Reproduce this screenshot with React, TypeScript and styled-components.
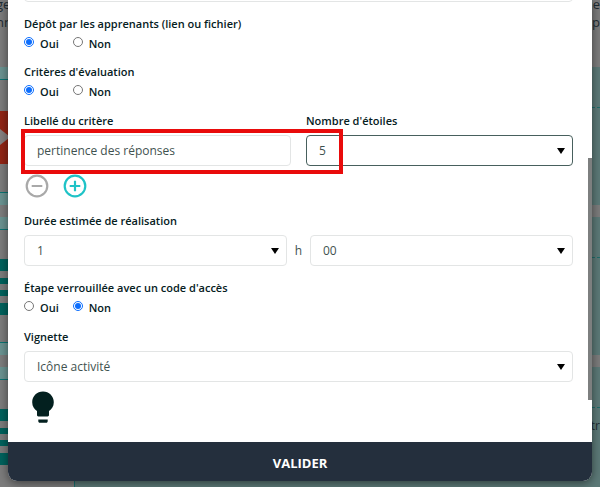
import React, { useState } from "react";
import styled, { createGlobalStyle } from "styled-components";

const GlobalStyle = createGlobalStyle`
  *, *::before, *::after { box-sizing: border-box; }
  body {
    margin: 0;
    background: #7c7c7c;
    color: #06201e;
    font-family: "Open Sans", "Noto Sans", sans-serif;
    font-size: 12px;
    line-height: 16px;
  }
`;

const Page = styled.div`
  position: relative;
  min-height: 100vh;
  overflow: hidden;
`;

/* Dimmed course page behind the dialog */
const Backdrop = styled.div`
  position: absolute;
  inset: 0;
  overflow: hidden;
  background: #7c7c7c;
  color: #1f2c33;
`;

const Intro = styled.div`
  display: flex;
  flex-direction: column;
  height: 67px;
  margin: -5px 0 5px -4px;
  font-size: 13px;
  line-height: 18px;
`;

const IntroLine = styled.div`
  display: flex;
  justify-content: space-between;
`;

const Lesson = styled.div`
  display: grid;
  grid-template-columns: 75px 1fr;
  height: 138px;
  margin-bottom: 12px;
`;

const Thumb = styled.div`
  display: flex;
  flex-direction: column;
  justify-content: space-between;
  border-right: 1px solid #18706f;
`;

const Band = styled.div<{ $edge: "top" | "bottom" }>`
  height: 13px;
  background: #6a9391;
  border-${(p) => p.$edge}: 1px solid #0b7473;
`;

const VideoTile = styled.div`
  display: flex;
  align-items: center;
  height: 53px;
  margin-top: 2px;
  background: #912515;
`;

const TextTile = styled.div`
  display: flex;
  flex-direction: column;
  justify-content: space-between;
  height: 56px;
  margin-top: 2px;
`;

const Stripe = styled.div<{ $thick?: boolean }>`
  height: ${(p) => (p.$thick ? 12 : 6)}px;
  background: #00625d;
`;

const Summary = styled.div`
  display: flex;
  flex-direction: column;
  gap: 10px;
  padding-top: 40px;
  background: #5c7977;
  text-align: right;
`;

const Dashes = styled.div`
  border-top: 1px dashed #1f6c6a;
`;

const Dialog = styled.form`
  position: relative;
  margin: 0 8px 6px;
  border-radius: 0 0 9px 9px;
  overflow: hidden;
  background: #fff;
  box-shadow: 0 2px 10px rgba(0, 0, 0, 0.5);
`;

const Scroller = styled.div`
  display: flex;
  overflow: hidden;
`;

const Fields = styled.div`
  flex: 1;
  min-width: 0;
  padding: 0 15px 18px 16px;
`;

const Rail = styled.div`
  display: flex;
  flex-direction: column;
  justify-content: flex-end;
  width: 4px;
  padding-bottom: 42px;
`;

const RailThumb = styled.div`
  height: 242px;
  background: #7d7f7f;
`;

const Group = styled.fieldset`
  margin: 0 0 12px;
  padding: 0;
  border: 0;
  min-width: 0;
`;

const Block = styled.div`
  margin-bottom: 14px;
`;

const Legend = styled.legend`
  padding: 0;
  font-size: 11px;
  font-weight: 600;
  line-height: 16px;
`;

const Label = styled.label`
  display: block;
  padding-top: 1px;
  margin-bottom: 6px;
  font-size: 11px;
  font-weight: 600;
  line-height: 16px;
`;

const Choices = styled.div`
  display: flex;
  gap: 14px;
  height: 20px;
`;

const Choice = styled.label`
  display: flex;
  gap: 6px;
  font-size: 11px;
  font-weight: 600;
  line-height: 24px;
`;

const Radio = styled.input`
  width: 10px;
  height: 10px;
  margin: 5px 0;
  accent-color: #0d6efd;
`;

const TextBox = styled.input`
  display: block;
  width: 100%;
  height: 31px;
  padding: 0 12px;
  border: 1px solid #e3e5e5;
  border-radius: 4px;
  background: #fff;
  color: #3f5250;
  font: inherit;
  outline: none;
`;

const PreviousBox = styled(TextBox)`
  margin-top: -29px;
  margin-bottom: 14px;
`;

const SelectWrap = styled.div`
  position: relative;
`;

const SelectBox = styled.select<{ $active?: boolean }>`
  display: block;
  width: 100%;
  height: 31px;
  padding: 0 24px 0 12px;
  border: 1px solid ${(p) => (p.$active ? "#48605d" : "#e3e5e5")};
  border-radius: 4px;
  background: #fff;
  color: #3f5250;
  font: inherit;
  appearance: none;
  outline: none;
`;

const Arrow = styled.svg`
  position: absolute;
  right: 8px;
  top: 50%;
  width: 8px;
  height: 6px;
  margin-top: -3px;
  pointer-events: none;
`;

const CriterionRow = styled.div`
  position: relative;
  display: grid;
  grid-template-columns: 1fr 1fr;
  gap: 15px;
`;

const Highlight = styled.div`
  position: absolute;
  left: -3px;
  right: 230px;
  bottom: -8px;
  height: 45px;
  border: 4px solid #e90b0b;
  pointer-events: none;
`;

const Actions = styled.div`
  display: flex;
  gap: 14px;
  margin-top: 8px;
  padding-left: 1px;
`;

const RoundButton = styled.button<{ $color: string }>`
  display: block;
  width: 24px;
  height: 24px;
  padding: 0;
  border: 0;
  background: none;
  color: ${(p) => p.$color};
  svg { display: block; }
`;

const Duration = styled.div`
  display: grid;
  grid-template-columns: 1fr 23px 1fr;
  align-items: center;
  color: #3f5250;
  text-align: center;
`;

const Bulb = styled.svg`
  display: block;
  width: 22px;
  height: 33px;
  margin: 9px 0 0 8px;
`;

const Submit = styled.button`
  display: block;
  width: 100%;
  height: 39px;
  padding: 2px 0 0;
  border: 0;
  background: #242f3d;
  color: #fff;
  font: inherit;
  font-size: 13px;
  font-weight: 700;
  text-transform: uppercase;
`;

function YesNo({ legend, name, initial }: { legend: string; name: string; initial: string }) {
  const [value, setValue] = useState(initial);
  return (
    <Group>
      <Legend>{legend}</Legend>
      <Choices>
        {["Oui", "Non"].map((option) => (
          <Choice key={option}>
            <Radio
              type="radio"
              name={name}
              value={option}
              checked={value === option}
              onChange={() => setValue(option)}
            />
            {option}
          </Choice>
        ))}
      </Choices>
    </Group>
  );
}

function Select({ id, label, options, active }: { id: string; label?: string; options: string[]; active?: boolean }) {
  return (
    <SelectWrap>
      <SelectBox id={id} aria-label={label} $active={active}>
        {options.map((o) => (
          <option key={o}>{o}</option>
        ))}
      </SelectBox>
      <Arrow viewBox="0 0 8 6" aria-hidden="true">
        <path d="M0 0h8L4 6z" fill="#000" />
      </Arrow>
    </SelectWrap>
  );
}

function LessonCard({ video, note }: { video?: boolean; note?: string }) {
  return (
    <Lesson>
      <Thumb>
        <Band $edge="bottom" />
        {video ? (
          <VideoTile>
            <svg width="9" height="24" viewBox="0 0 9 24">
              <path d="M0 4L9 11V13L0 20z" fill="#858080" />
            </svg>
          </VideoTile>
        ) : (
          <TextTile>
            <Stripe $thick />
            <Stripe />
            <Stripe />
            <Stripe $thick />
          </TextTile>
        )}
        <Band $edge="top" />
      </Thumb>
      <Summary>
        <Dashes />
        {note}
      </Summary>
    </Lesson>
  );
}

export default function App() {
  return (
    <Page>
      <GlobalStyle />
      <Backdrop aria-hidden="true">
        <Intro>
          <IntroLine>
            <span>ge</span>
            <span>nie</span>
          </IntroLine>
          <IntroLine>
            <span>nn</span>
            <span>p</span>
          </IntroLine>
        </Intro>
        <LessonCard video />
        <LessonCard />
        <LessonCard note="tr" />
      </Backdrop>

      <Dialog onSubmit={(e) => e.preventDefault()}>
        <Scroller>
          <Fields>
            <PreviousBox aria-label="Consigne" />
            <YesNo legend="Dépôt par les apprenants (lien ou fichier)" name="depot" initial="Oui" />
            <YesNo legend="Critères d'évaluation" name="criteres" initial="Oui" />
            <Block>
              <CriterionRow>
                <div>
                  <Label htmlFor="libelle">Libellé du critère</Label>
                  <TextBox id="libelle" defaultValue="pertinence des réponses" />
                </div>
                <div>
                  <Label htmlFor="etoiles">Nombre d'étoiles</Label>
                  <Select id="etoiles" options={["5"]} active />
                </div>
                <Highlight />
              </CriterionRow>
              <Actions>
                <RoundButton type="button" aria-label="Retirer un critère" $color="#a9a9a9">
                  <svg width="24" height="24" viewBox="0 0 24 24" fill="none" stroke="currentColor" strokeWidth="2.2">
                    <circle cx="12" cy="12" r="10.3" />
                    <path d="M6.7 12h10.6" />
                  </svg>
                </RoundButton>
                <RoundButton type="button" aria-label="Ajouter un critère" $color="#1fc3c7">
                  <svg width="24" height="24" viewBox="0 0 24 24" fill="none" stroke="currentColor" strokeWidth="2.2">
                    <circle cx="12" cy="12" r="10.3" />
                    <path d="M6.7 12h10.6M12 6.7v10.6" />
                  </svg>
                </RoundButton>
              </Actions>
            </Block>
            <Block>
              <Label htmlFor="heures">Durée estimée de réalisation</Label>
              <Duration>
                <Select id="heures" options={["1"]} />
                h
                <Select id="minutes" label="Minutes" options={["00"]} />
              </Duration>
            </Block>
            <YesNo legend="Étape verrouillée avec un code d'accès" name="verrou" initial="Non" />
            <Label htmlFor="vignette">Vignette</Label>
            <Select id="vignette" options={["Icône activité"]} />
            <Bulb viewBox="0 0 22 33" fill="#03201f" aria-hidden="true">
              <path d="M11 .5C5 .5.2 5.200.2 11.200c0 4.200 2.200 7 4.800 8.900v4c0 .800.500 1.400 1.400 1.400h9.200c.9 0 1.400-.6 1.400-1.400v-4c2.600-1.900 4.800-4.700 4.800-8.900C21.800 5.200 17 .5 11 .5z" />
              <path d="M6.300 28.500h9.400v1.800c0 .900-.6 1.500-1.500 1.500H7.800c-.9 0-1.500-.6-1.500-1.500z" />
            </Bulb>
          </Fields>
          <Rail aria-hidden="true">
            <RailThumb />
          </Rail>
        </Scroller>
        <Submit type="submit">Valider</Submit>
      </Dialog>
    </Page>
  );
}
